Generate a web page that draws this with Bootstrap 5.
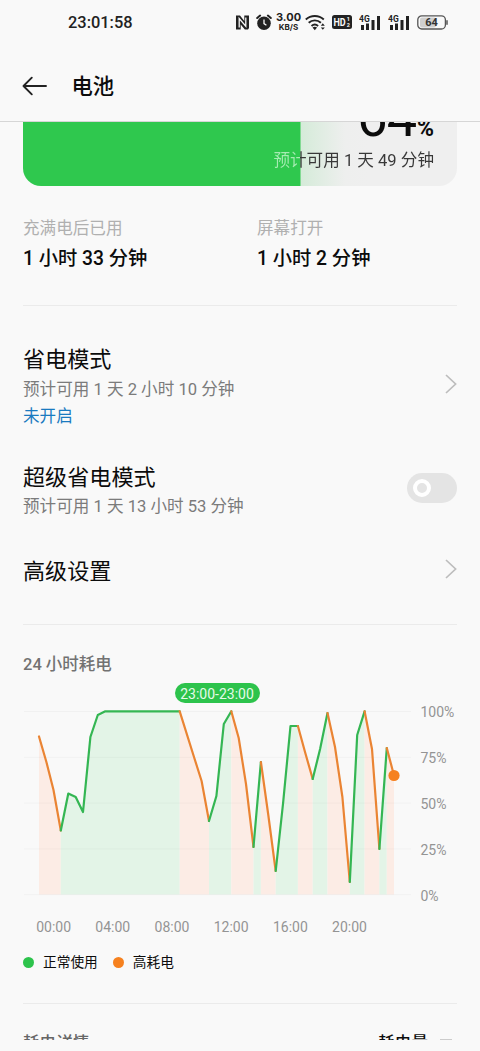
<!DOCTYPE html>
<html lang="zh-CN">
<head>
<meta charset="utf-8">
<meta name="viewport" content="width=device-width, initial-scale=1">
<title>电池</title>
<link href="https://cdn.jsdelivr.net/npm/bootstrap@5.3.0/dist/css/bootstrap.min.css" rel="stylesheet">
<style>
  body { background: #f9f9f9; color: #0c0c0c; font-family: Roboto, "Noto Sans CJK SC", sans-serif; font-size: 16.6px; }
  .screen { width: 480px; height: 1040px; }
  .status { height: 44px; padding: 0 32px 0 68px; }
  .clock { font-size: 16.4px; line-height: 44px; font-weight: 500; color: #222; padding-top: 2px; }
  .net { width: 25px; margin: 0 4px 0 4px; font-weight: 700; color: #222; text-align: center; }
  .net-n { font: 700 11px/11px Inter, sans-serif; }
  .net-u { font: 700 8px/9px Inter, sans-serif; }
  .topbar { height: 78px; padding: 6px 22px 0; border-bottom: 1px solid #d6d6d6; }
  .topbar h1 { font-size: 21.3px; font-weight: 500; margin: 0 0 0 23.5px; padding-top: 3px; line-height: 30px; }
  .back { margin-top: 1px; }
  .scroller { padding: 0 23px; }
  .level { height: 64px; border-radius: 0 0 18px 18px; background: linear-gradient(90deg, #2fc84e 277px, #d5ebd9 278px, #eeefee 322px, #efefef 345px); padding-right: 23px; }
  .pct { height: 26px; font-size: 54px; line-height: 60px; letter-spacing: -1px; }
  .pct small { font-size: 23px; line-height: 1; font-weight: 700; letter-spacing: 0; margin-left: 1px; }
  .left-time { line-height: 26px; background: linear-gradient(90deg, #a6ebb2 27px, #383838 27px); -webkit-background-clip: text; background-clip: text; color: transparent; }
  .usage { height: 120px; padding-top: 29px; border-bottom: 1px solid #ebebeb; }
  .usage dt { font-weight: 400; color: #b0b0b0; line-height: 28px; }
  .usage dd { font-size: 19.3px; font-weight: 500; line-height: 31px; margin: 0; }
  .usage .second { padding-left: 17px; }
  .usage .first { flex: 0 0 217px; }
  .modes { height: 319px; border-bottom: 1px solid #ebebeb; padding-top: 36px; }
  .opt h2 { font-size: 22.1px; font-weight: 400; line-height: 32px; margin: 0; padding-top: 1px; }
  .opt p { margin: 0; color: #7b7b7b; line-height: 28px; }
  .opt .state { color: #1a7ac0; line-height: 26px; }
  .opt-a { height: 118px; } .opt-b { height: 92px; } .opt-c { height: 36px; }
  .opt-a p:nth-child(2) { padding-top: 1px; }
  .opt-c h2 { padding-top: 3px; }
  .toggle { width: 50px; height: 30px; margin-top: 13px; border-radius: 15px; background: #e4e4e4; padding-left: 6px; }
  .toggle i { width: 18px; height: 18px; border-radius: 50%; border: 4px solid #fff; }
  .drain { height: 379px; border-bottom: 1px solid #ebebeb; padding-top: 27px; }
  .drain h3 { font-size: 16.5px; font-weight: 500; line-height: 26px; margin: 0; color: #727272; }
  .tip { width: 85px; height: 20px; margin: 5px 0 0 151.5px; border-radius: 10px; background: #2dc34c; color: #e6fae9; font-size: 14px; line-height: 22px; }
  .ylab { font-size: 14px; line-height: 16px; color: #949494; height: 200px; margin-left: 7.5px; position: relative; top: 1px; }
  .xlab { font-size: 14px; line-height: 20px; color: #949494; margin-top: 14px; padding-left: 1px; }
  .xlab span { width: 59.2px; text-align: center; }
  .legend { font-size: 13.7px; line-height: 20px; margin-top: 15px; }
  .legend i { width: 11px; height: 11px; border-radius: 50%; }
  .detail { padding-top: 27px; line-height: 26px; font-weight: 500; }
  .sortmark { width: 12px; height: 1px; margin: 8px 5px 0 12px; background: #ccc; }
</style>
</head>
<body>
<div class="screen overflow-hidden d-flex flex-column">
  <header>
    <div class="status d-flex align-items-center justify-content-between">
      <span class="clock">23:01:58</span>
      <div class="d-flex align-items-center">
        <svg width="15" height="15" viewBox="0 0 15 15"><path fill="#222" d="M1 .5h4L9.3 6V.5H14V13l-1 1.5H9.8L5.7 9.6v4.9H1z"/><path d="M4.2 12.5V3.6l6.6 7.6V2.5" fill="none" stroke="#f9f9f9" stroke-width="1.3"/></svg>
        <svg style="margin-left:6px" width="16" height="17" viewBox="0 0 16 17"><circle cx="8" cy="9.3" r="6.8" fill="#222"/><path d="M1.2 4 4.1 1.6M14.8 4 11.9 1.6" stroke="#222" stroke-width="2" stroke-linecap="round"/><path d="M8 5.6v4l2.4 1.6" fill="none" stroke="#f9f9f9" stroke-width="1.3"/></svg>
        <div class="net"><div class="net-n">3.00</div><div class="net-u">KB/S</div></div>
        <svg width="21" height="17" viewBox="0 0 21 17" fill="none" stroke="#222" stroke-width="1.9"><path d="M.8 5.5a13.2 13.2 0 0 1 18 0M3.7 8.8a8.8 8.8 0 0 1 12.2 0M6.5 12a5 5 0 0 1 6.6 0"/><path d="m7.5 13.5 2.3 2.8 2.3-2.8q-2.3-1.5-4.6 0zM15.8 11.7l2-2.4 2 2.4zM15.8 13.4l2 2.4 2-2.4z" fill="#222" stroke="none"/></svg>
        <svg style="margin-left:6px" width="20" height="14" viewBox="0 0 20 14"><rect width="20" height="14" rx="2.5" fill="#222"/><g fill="#f9f9f9" font-family="Roboto" font-weight="700"><text x="1.5" y="10.6" font-size="10" textLength="12.2" lengthAdjust="spacingAndGlyphs">HD</text><text x="14.8" y="6.3" font-size="5.5">1</text><text x="14.8" y="12" font-size="5.5">2</text></g></svg>
        <svg style="margin-left:7px" width="22" height="17" viewBox="0 0 22 17"><g fill="#222"><text x="0" y="8" font-family="Roboto" font-weight="700" font-size="8.5">4G</text><path d="M2 11h3v5H2zM7 9.5h3V16H7zM12.5 6h3v10h-3zM18 2h3v14h-3z"/></g></svg>
        <svg style="margin-left:7px" width="22" height="17" viewBox="0 0 22 17"><g fill="#222"><text x="0" y="8" font-family="Roboto" font-weight="700" font-size="8.5">4G</text><path d="M2 11h3v5H2zM7 9.5h3V16H7zM12.5 6h3v10h-3zM18 2h3v14h-3z"/></g></svg>
        <svg style="margin-left:7px" width="31" height="15" viewBox="0 0 31 15"><rect x="3" y="2.6" width="16" height="9.8" rx="2" fill="#cfcfcf"/><rect x=".8" y=".8" width="27.6" height="13.2" rx="4" fill="none" stroke="#555" stroke-width="1.3"/><path d="M30 5.2v4.6" stroke="#555" stroke-width="1.5"/><text x="14.6" y="11.3" text-anchor="middle" font-family="Roboto" font-weight="700" font-size="11" fill="#333">64</text></svg>
      </div>
    </div>
    <div class="topbar d-flex align-items-center">
      <svg class="back" width="26" height="20" viewBox="0 0 26 20" fill="none" stroke="#222" stroke-width="1.9" stroke-linecap="round" stroke-linejoin="round"><path d="M24 10H1.5M9.8 1.7 1.5 10l8.3 8.3"/></svg>
      <h1>电池</h1>
    </div>
  </header>
  <main class="scroller">
    <section class="level overflow-hidden d-flex flex-column align-items-end">
      <div class="pct d-flex align-items-end"><div>64<small>%</small></div></div>
      <div class="left-time">预计可用 1 天 49 分钟</div>
    </section>
    <dl class="usage d-flex m-0">
      <div class="first"><dt>充满电后已用</dt><dd>1 小时 33 分钟</dd></div>
      <div class="second"><dt>屏幕打开</dt><dd>1 小时 2 分钟</dd></div>
    </dl>
    <section class="modes">
      <div class="opt opt-a d-flex justify-content-between">
        <div><h2>省电模式</h2><p>预计可用 1 天 2 小时 10 分钟</p><p class="state">未开启</p></div>
        <svg style="margin-top:32px" width="12" height="20" viewBox="0 0 12 20" fill="none" stroke="#bdbdbd" stroke-width="1.7"><path d="m1 1 9.6 9L1 19"/></svg>
      </div>
      <div class="opt opt-b d-flex justify-content-between">
        <div><h2>超级省电模式</h2><p>预计可用 1 天 13 小时 53 分钟</p></div>
        <div class="toggle d-flex align-items-center"><i></i></div>
      </div>
      <div class="opt opt-c d-flex justify-content-between align-items-start">
        <h2>高级设置</h2>
        <svg style="margin-top:7px" width="12" height="20" viewBox="0 0 12 20" fill="none" stroke="#bdbdbd" stroke-width="1.7"><path d="m1 1 9.6 9L1 19"/></svg>
      </div>
    </section>
    <section class="drain">
      <h3>24 小时耗电</h3>
      <div class="tip text-center">23:00-23:00</div>
      <div class="d-flex">
        <svg id="plot" width="390" height="200" viewBox="23 703 390 200"></svg>
        <div class="ylab d-flex flex-column justify-content-between"><span>100%</span><span>75%</span><span>50%</span><span>25%</span><span>0%</span></div>
      </div>
      <div class="xlab d-flex"><span>00:00</span><span>04:00</span><span>08:00</span><span>12:00</span><span>16:00</span><span>20:00</span></div>
      <div class="legend d-flex align-items-center">
        <i style="background:#2dc34c"></i><span style="margin:0 15px 0 9px">正常使用</span>
        <i style="background:#f6811f"></i><span style="margin-left:9px">高耗电</span>
      </div>
    </section>
    <section class="detail d-flex">
      <span class="me-auto" style="color:#666">耗电详情</span>
      <span>耗电量</span>
      <span class="sortmark"></span>
    </section>
  </main>
</div>
<script>
  // Battery curve: runs of normal (g) and high (o) drain
  const runs = [
    ['o', [39,736.5],[46.4,762],[53.5,790],[60.8,830.5]],
    ['g', [60.8,830.5],[68.3,793.5],[75.7,797],[83,812],[90.4,737],[97.8,715],[105.3,711.3],[179.7,711.3]],
    ['o', [179.7,711.3],[194,757],[201.6,781],[209,821]],
    ['g', [209,821],[216.4,796],[223.8,724],[231.3,711.3]],
    ['o', [231.3,711.3],[238.7,738],[246,784],[253.5,847]],
    ['g', [253.5,847],[260.9,762]],
    ['o', [260.9,762],[268.3,815],[275.7,871]],
    ['g', [275.7,871],[283.1,803],[290.5,726],[297.9,726]],
    ['o', [297.9,726],[305.3,753],[312.7,779]],
    ['g', [312.7,779],[320.1,749],[327.5,713]],
    ['o', [327.5,713],[335,747],[342.4,797],[349.8,882]],
    ['g', [349.8,882],[357.2,735],[364.6,711.3]],
    ['o', [364.6,711.3],[372,749],[379.4,849]],
    ['g', [379.4,849],[386.8,748]],
    ['o', [386.8,748],[394,775.5]]
  ];
  const line = { g: '#34b653', o: '#ea8433' }, area = { g: '#e3f4e7', o: '#fcece5' };
  let fills = '', strokes = '', grid = '';
  for (const [k, ...p] of runs) {
    const d = p.map(q => q.join(' ')).join('L');
    fills += `<path fill="${area[k]}" d="M${p[0][0]} 894.5L${d}V894.5z"/>`;
    strokes += `<path fill="none" stroke="${line[k]}" stroke-width="2.2" stroke-linejoin="round" stroke-linecap="round" d="M${d}"/>`;
  }
  for (let i = 0; i < 5; i++) grid += `<path stroke="#000" stroke-opacity=".03" d="M24 ${711.5 + i * 45.8}H411"/>`;
  document.getElementById('plot').innerHTML = fills + grid + strokes + '<circle cx="394" cy="775.5" r="5.6" fill="#f6811f"/>';
</script>
<script src="https://cdn.jsdelivr.net/npm/bootstrap@5.3.0/dist/js/bootstrap.bundle.min.js"></script>
</body>
</html>
